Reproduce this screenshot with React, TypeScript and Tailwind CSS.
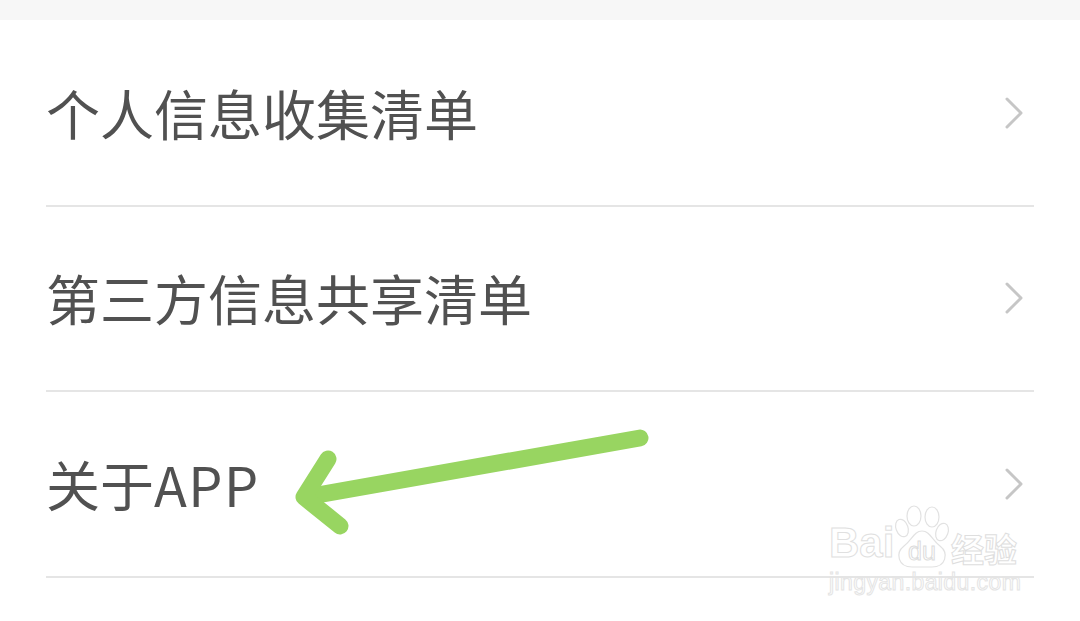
import React from 'react';

const rows: React.ReactNode[] = [
  '个人信息收集清单',
  '第三方信息共享清单',
  <>关于<span className="tracking-[1.5px]">APP</span></>,
];

const Chevron = () => (
  <svg width="20" height="34" viewBox="0 0 20 34" fill="none" className="shrink-0">
    <path d="M3 3 L17 17 L3 31" stroke="#c6c6c6" strokeWidth="3" strokeLinecap="round" strokeLinejoin="round" />
  </svg>
);

const Watermark = () => (
  <div className="absolute left-[829px] top-[505px] flex w-[196px] flex-col select-none">
    <div className="flex h-[63px] items-end">
      <span className="w-[64px] shrink-0 text-[42px] leading-[50px] font-bold text-transparent [-webkit-text-stroke:1px_#e0e0e0] [font-family:'Liberation_Sans',sans-serif]">Bai</span>
      <div className="relative h-[63px] w-[58px] shrink-0">
        <svg width="58" height="63" viewBox="0 0 58 63" fill="#fff" stroke="#e2e2e2" strokeWidth="1.2">
          <ellipse cx="9" cy="23" rx="6" ry="9" transform="rotate(-20 9 23)" />
          <ellipse cx="21" cy="11" rx="7" ry="10" />
          <ellipse cx="39" cy="12" rx="7" ry="10" />
          <ellipse cx="49" cy="27" rx="6" ry="9" transform="rotate(20 49 27)" />
          <path d="M29 26 C21 26 19 35 11 41 C2 48 5 62 19 62 C25 62 33 62 39 62 C53 62 56 48 47 41 C39 35 37 26 29 26 Z" />
        </svg>
        <span className="absolute inset-x-0 bottom-[2px] text-center text-[25px] leading-[30px] text-transparent [-webkit-text-stroke:1px_#dcdcdc] [font-family:'Liberation_Sans',sans-serif]">du</span>
      </div>
      <span className="text-[33px] leading-[40px] font-bold text-transparent [-webkit-text-stroke:1px_#dedede] [font-family:'Noto_Sans_CJK_SC',sans-serif]">经验</span>
    </div>
    <span className="text-[23px] leading-[28px] tracking-[0.4px] whitespace-nowrap text-transparent [-webkit-text-stroke:1px_#e4e4e4] [font-family:'Liberation_Sans',sans-serif]">jingyan.baidu.com</span>
  </div>
);

const Arrow = () => (
  <svg width="1080" height="621" viewBox="0 0 1080 621" fill="none" className="absolute left-0 top-0 pointer-events-none">
    <path d="M640 438 L306 497" stroke="#98d561" strokeWidth="17" strokeLinecap="round" />
    <path d="M328 459 L304 497 L340 526" stroke="#98d561" strokeWidth="17" strokeLinecap="round" strokeLinejoin="round" />
  </svg>
);

export default function App() {
  return (
    <div className="relative h-[621px] w-[1080px] overflow-hidden bg-white font-['Liberation_Sans','Noto_Sans_CJK_SC',sans-serif]">
      <div className="h-[20px] bg-[#f7f7f7]" />
      <div className="px-[46px] pt-[1px]">
        {rows.map((label, i) => (
          <div key={i} className="flex h-[185.5px] items-center justify-between border-b-2 border-[#e5e5e5] pr-[10px]">
            <span className="text-[54px] leading-none text-[#515151] [font-family:'Noto_Sans_CJK_SC',sans-serif]">{label}</span>
            <Chevron />
          </div>
        ))}
      </div>
      <Watermark />
      <Arrow />
    </div>
  );
}
